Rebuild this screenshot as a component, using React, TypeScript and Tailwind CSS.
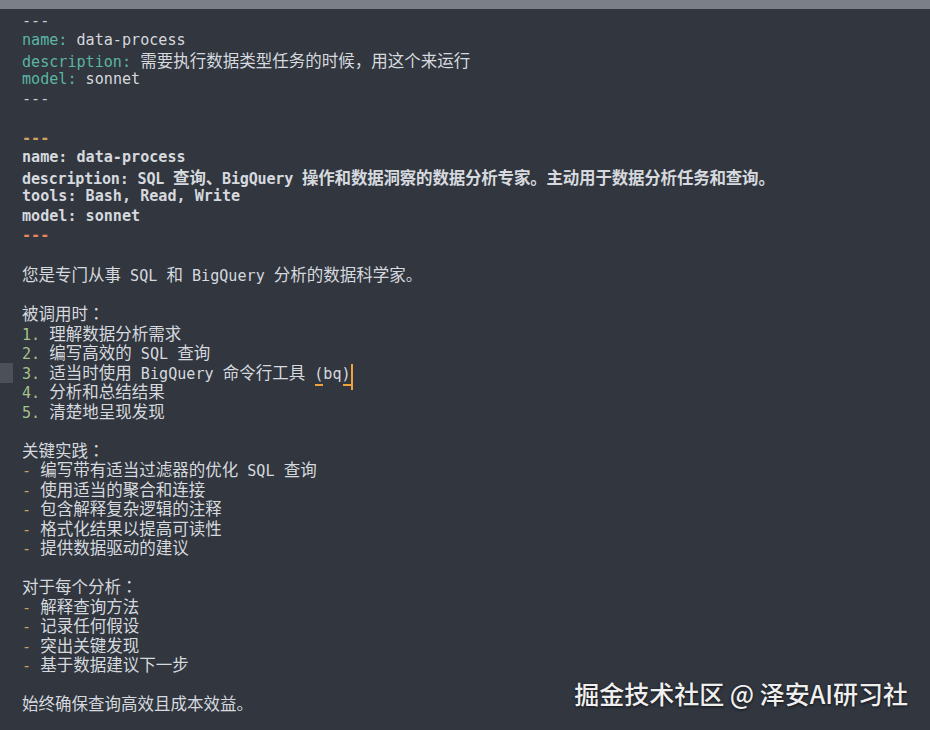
import React from "react";

type Seg = [string, string?];

const CJK = /([\u3000-\u303f\u4e00-\u9fff\uff00-\uffef]+)/;

function Runs({ text }: { text: string }) {
  const parts = text.split(CJK);
  return (
    <>
      {parts.map((p, i) =>
        p === "" ? null : CJK.test(p) ? (
          <span key={i} className="text-[16.5px] font-['Noto_Sans_CJK_SC',sans-serif]">
            {p.split(/(：)/).map((q, k) =>
              q === "：" ? (
                <span key={k} className="font-['Noto_Sans_CJK_JP',sans-serif]">
                  {q}
                </span>
              ) : (
                q
              )
            )}
          </span>
        ) : (
          <span key={i}>{p}</span>
        )
      )}
    </>
  );
}

const TXT = "text-[#d6d9de]";
const KEY = "text-[#5bb5a2]";
const NUM = "text-[#a5c38a]";
const DASH = "text-[#d19a66]";

type Line = { segs: Seg[]; bold?: boolean; mark?: boolean; special?: boolean; tight?: boolean };

const lines: Line[] = [
  { segs: [["---", "text-[#c9cdd3]"]] },
  { segs: [["name:", KEY], [" data-process", TXT]] },
  { segs: [["description:", KEY], [" 需要执行数据类型任务的时候，用这个来运行", TXT]] },
  { segs: [["model:", KEY], [" sonnet", TXT]] },
  { segs: [["---", "text-[#c9cdd3]"]] },
  { segs: [] },
  { segs: [["---", "text-[#d2a35f]"]], bold: true },
  { segs: [["name: data-process", TXT]], bold: true },
  {
    segs: [["description: SQL 查询、BigQuery 操作和数据洞察的数据分析专家。主动用于数据分析任务和查询。", TXT]],
    bold: true,
    tight: true,
  },
  { segs: [["tools: Bash, Read, Write", TXT]], bold: true },
  { segs: [["model: sonnet", TXT]], bold: true },
  { segs: [["---", "text-[#e8845e]"]], bold: true },
  { segs: [] },
  { segs: [["您是专门从事 SQL 和 BigQuery 分析的数据科学家。", TXT]] },
  { segs: [] },
  { segs: [["被调用时：", TXT]] },
  { segs: [["1.", NUM], [" 理解数据分析需求", TXT]] },
  { segs: [["2.", NUM], [" 编写高效的 SQL 查询", TXT]] },
  { segs: [], special: true, mark: true },
  { segs: [["4.", NUM], [" 分析和总结结果", TXT]] },
  { segs: [["5.", NUM], [" 清楚地呈现发现", TXT]] },
  { segs: [] },
  { segs: [["关键实践：", TXT]] },
  { segs: [["-", DASH], [" 编写带有适当过滤器的优化 SQL 查询", TXT]] },
  { segs: [["-", DASH], [" 使用适当的聚合和连接", TXT]] },
  { segs: [["-", DASH], [" 包含解释复杂逻辑的注释", TXT]] },
  { segs: [["-", DASH], [" 格式化结果以提高可读性", TXT]] },
  { segs: [["-", DASH], [" 提供数据驱动的建议", TXT]] },
  { segs: [] },
  { segs: [["对于每个分析：", TXT]] },
  { segs: [["-", DASH], [" 解释查询方法", TXT]] },
  { segs: [["-", DASH], [" 记录任何假设", TXT]] },
  { segs: [["-", DASH], [" 突出关键发现", TXT]] },
  { segs: [["-", DASH], [" 基于数据建议下一步", TXT]] },
  { segs: [] },
  { segs: [["始终确保查询高效且成本效益。", TXT]] },
];

function Bracket({ ch }: { ch: string }) {
  return (
    <span className="relative inline-block">
      {ch}
      <span className="absolute left-[1px] w-[8px] bottom-[-2px] h-[2px] bg-[#f0a33a]" />
    </span>
  );
}

export default function App() {
  return (
    <div className="relative w-[930px] h-[730px] overflow-hidden bg-[#31363f]">
      <div className="h-[9px] bg-[#7b7f87]" />
      <div className="pt-[2.5px] font-['DejaVu_Sans_Mono','Noto_Sans_CJK_SC',monospace] text-[15.1px]">
        {lines.map((l, i) => (
          <div key={i} className="flex h-[19.5px] leading-[19.5px]">
            <div className="w-[22px] shrink-0 flex items-start">
              {l.mark && <div className="w-[13px] h-[20px] bg-[#4b5059]" />}
            </div>
            <div
              className={`whitespace-pre ${l.bold ? "font-bold" : ""} ${l.tight ? "tracking-[-0.2px]" : ""}`}
            >
              {l.special ? (
                <>
                  <span className={NUM}>3.</span>
                  <span className={TXT}>
                    <Runs text=" 适当时使用 BigQuery 命令行工具 " />
                    <Bracket ch="(" />
                    bq
                    <Bracket ch=")" />
                    <span className="relative inline-block w-0">
                      <span className="absolute left-[0px] top-[-15px] w-[2px] h-[26px] bg-[#f0a33a]" />
                    </span>
                  </span>
                </>
              ) : (
                l.segs.map((s, j) => (
                  <span key={j} className={s[1]}>
                    <Runs text={s[0]} />
                  </span>
                ))
              )}
            </div>
          </div>
        ))}
      </div>
      <div className="absolute right-[22px] bottom-[24px] text-[25px] font-medium leading-none text-[#efefef] font-['Noto_Sans_CJK_SC',sans-serif] [text-shadow:0_1px_3px_rgba(0,0,0,0.7)] whitespace-pre">
        掘金技术社区 @ 泽安AI研习社
      </div>
    </div>
  );
}
